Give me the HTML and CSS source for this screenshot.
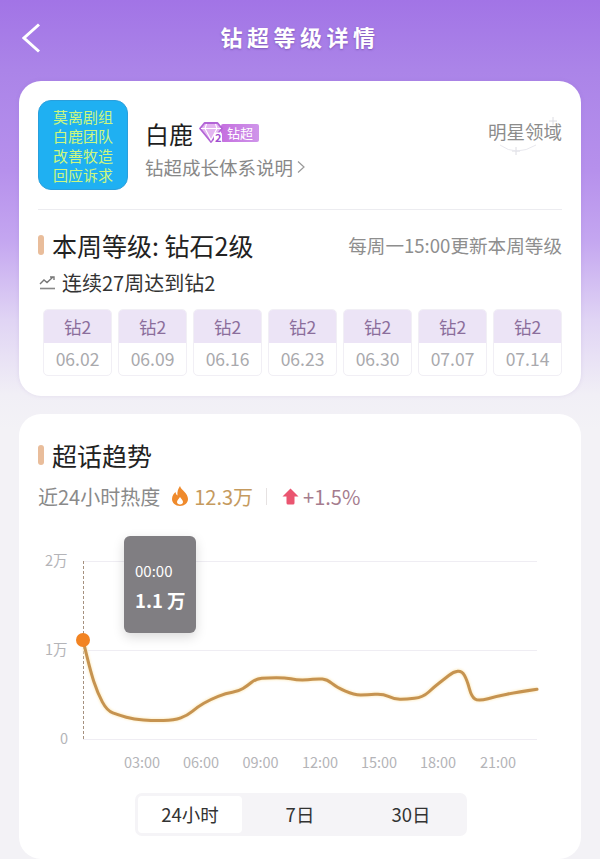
FILE: index.html
```html
<!DOCTYPE html>
<html>
<head>
    <title>钻超等级详情</title>
    <link rel="stylesheet" href="styles.css">
</head>
<body>
    <header class="topbar">
        <svg class="back" width="18" height="30" viewBox="0 0 18 30"><path d="M17 1.5 L2 15 L17 28.5" fill="none" stroke="#fff" stroke-width="3"/></svg>
        <h1>钻超等级详情</h1>
    </header>

    <section class="card level-card">
        <div class="profile">
            <div class="avatar">莫离剧组<br>白鹿团队<br>改善牧造<br>回应诉求</div>
            <div class="info">
                <div class="name-row">
                    <span class="name">白鹿</span>
                    <span class="badge">
                        <span class="badge-text">钻超</span>
                        <svg class="gem" width="24" height="22" viewBox="0 0 24 22">
                            <path d="M5.500 1 H18.500 L23 6.500 L12 20 L1 6.500 Z" fill="#e3b5f0" stroke="#b264d6" stroke-width="1.8" stroke-linejoin="round"/>
                            <path d="M2 6.500 H22 M7.500 2 L6 6.500 L12 18 L18 6.500 L16.500 2" fill="none" stroke="#fff" stroke-width="1.1"/>
                            <rect x="15" y="10.500" width="8" height="11" rx="2" fill="#fff"/>
                        </svg>
                        <span class="gem-num">2</span>
                    </span>
                </div>
                <div class="explain">钻超成长体系说明<svg class="chev" width="8" height="14" viewBox="0 0 8 14"><path d="M1 1.5 L7 7 L1 12.5" fill="none" stroke="#999" stroke-width="1.2"/></svg></div>
            </div>
            <div class="domain">
                明星领域
                <svg class="sparkle" width="70" height="50" viewBox="0 0 70 50">
                    <path d="M61 0 V8 M57 4 H65 M24 30 V38 M20 34 H28" stroke="#dcdce2" stroke-width="1"/>
                    <path d="M8 28 Q24 40 44 28" fill="none" stroke="#e8e8ee" stroke-width="1"/>
                </svg>
            </div>
        </div>

        <div class="section-head level-head">
            <div class="section-title"><i class="mark"></i>本周等级: 钻石2级</div>
            <div class="update-note">每周一15:00更新本周等级</div>
        </div>

        <div class="streak">
            <svg width="17" height="14" viewBox="0 0 17 14"><path d="M1 8 L5 4 L8 6.5 L14 1 M11 1 H15 V4" fill="none" stroke="#777" stroke-width="1.4"/><path d="M1 12.5 H16" stroke="#888" stroke-width="1.6"/></svg>
            连续27周达到钻2
        </div>

        <div class="weeks">
            <div class="week"><div class="week-level">钻2</div><div class="week-date">06.02</div></div>
            <div class="week"><div class="week-level">钻2</div><div class="week-date">06.09</div></div>
            <div class="week"><div class="week-level">钻2</div><div class="week-date">06.16</div></div>
            <div class="week"><div class="week-level">钻2</div><div class="week-date">06.23</div></div>
            <div class="week"><div class="week-level">钻2</div><div class="week-date">06.30</div></div>
            <div class="week"><div class="week-level">钻2</div><div class="week-date">07.07</div></div>
            <div class="week"><div class="week-level">钻2</div><div class="week-date">07.14</div></div>
        </div>
    </section>

    <section class="card trend-card">
        <div class="section-title"><i class="mark"></i>超话趋势</div>

        <div class="heat">
            <span>近24小时热度</span>
            <svg class="flame" width="18" height="20" viewBox="0 0 18 20"><path d="M9 0 C10 4 17 7 17 13 C17 17 13.5 20 9 20 C4.500 20 1 17 1 13 C1 9.500 3 7.500 4.500 6 C4.800 8 5.500 9 6.500 9.500 C6 6 7 3 9 0 Z M9 11 C8 13 6 14 6 16 C6 17.500 7.300 18.500 9 18.500 C10.700 18.500 12 17.500 12 16 C12 14 10 13 9 11 Z" fill="#ef8a2c" fill-rule="evenodd"/></svg>
            <span class="heat-value">12.3万</span>
            <i class="heat-sep"></i>
            <svg class="up" width="17" height="17" viewBox="0 0 17 17"><path d="M8.500 0.500 L16.500 8.500 L12.500 8.500 L12.500 15 Q12.500 16.500 11 16.500 L6 16.500 Q4.500 16.500 4.500 15 L4.500 8.500 L0.500 8.500 Z" fill="#ea5570"/></svg>
            <span class="heat-rate">+1.5%</span>
        </div>

        <div class="chart">
            <svg width="524" height="250" viewBox="38 530 524 250">
                <defs>
                    <filter id="glow" x="-5%" y="-20%" width="110%" height="140%"><feGaussianBlur stdDeviation="1"/></filter>
                </defs>
                <path class="grid" d="M83 561.500 H537 M83 650.500 H537 M83 739.500 H537"/>
                <path class="guide" d="M83.500 561 V739"/>
                <text class="axis" x="45" y="566">2万</text>
                <text class="axis" x="45" y="655">1万</text>
                <text class="axis" x="60" y="744">0</text>
                <g class="axis time">
                    <text x="142" y="768">03:00</text>
                    <text x="201" y="768">06:00</text>
                    <text x="260.500" y="768">09:00</text>
                    <text x="320" y="768">12:00</text>
                    <text x="379" y="768">15:00</text>
                    <text x="438" y="768">18:00</text>
                    <text x="498" y="768">21:00</text>
                </g>
                <path class="line-glow" filter="url(#glow)" d="M83.4 641.7 Q90 670 93.8 681.5 Q97.6 693 102.3 701.9 Q107 710.7 112.8 712.9 Q118.6 715 126.3 717.2 Q134 719.3 143.5 720 Q153 720.7 163.5 720.5 Q174 720.3 180.8 717.8 Q187.5 715.3 192.3 711.3 Q197 707.3 203.8 703.3 Q210.5 699.3 218.2 696.3 Q225.8 693.3 232.4 692.2 Q239 691 243 688.5 Q247 686 251.3 682.5 Q255.6 679 261.8 678.3 Q268 677.7 276.5 677.7 Q285 677.7 290.8 678.8 Q296.6 680 302.3 680 Q308 680 312.8 679.3 Q317.6 678.7 322.3 679 Q327 679.3 331.9 683.3 Q336.8 687.3 345.4 691.2 Q354 695 360.7 695 Q367.4 695 375 694.3 Q382.7 693.7 388.4 696.3 Q394 699 399.9 699.2 Q405.7 699.3 414.4 698.3 Q423 697.3 428.7 692 Q434.4 686.7 439.2 683 Q444 679.3 448.8 675.5 Q453.5 671.7 457.8 671.3 Q462 671 464.5 675.5 Q467 680 469.3 688.3 Q471.5 696.7 475 699 Q478.4 701.3 488 698.7 Q497.5 696 507 694.2 Q516.7 692.3 537 689.3"/>
                <path class="line" d="M83.4 641.7 Q90 670 93.8 681.5 Q97.6 693 102.3 701.9 Q107 710.7 112.8 712.9 Q118.6 715 126.3 717.2 Q134 719.3 143.5 720 Q153 720.7 163.5 720.5 Q174 720.3 180.8 717.8 Q187.5 715.3 192.3 711.3 Q197 707.3 203.8 703.3 Q210.5 699.3 218.2 696.3 Q225.8 693.3 232.4 692.2 Q239 691 243 688.5 Q247 686 251.3 682.5 Q255.6 679 261.8 678.3 Q268 677.7 276.5 677.7 Q285 677.7 290.8 678.8 Q296.6 680 302.3 680 Q308 680 312.8 679.3 Q317.6 678.7 322.3 679 Q327 679.3 331.9 683.3 Q336.8 687.3 345.4 691.2 Q354 695 360.7 695 Q367.4 695 375 694.3 Q382.7 693.7 388.4 696.3 Q394 699 399.9 699.2 Q405.7 699.3 414.4 698.3 Q423 697.3 428.7 692 Q434.4 686.7 439.2 683 Q444 679.3 448.8 675.5 Q453.5 671.7 457.8 671.3 Q462 671 464.5 675.5 Q467 680 469.3 688.3 Q471.5 696.7 475 699 Q478.4 701.3 488 698.7 Q497.5 696 507 694.2 Q516.7 692.3 537 689.3"/>
                <circle cx="83" cy="640" r="7" fill="#f28322"/>
            </svg>
            <div class="tooltip">
                <div class="tip-time">00:00</div>
                <div class="tip-value">1.1 万</div>
            </div>
        </div>

        <div class="tabs">
            <div class="tab active">24小时</div>
            <div class="tab">7日</div>
            <div class="tab">30日</div>
        </div>
    </section>
</body>
</html>
```

FILE: styles.css
```css
html, body {
    height: 859px;
    overflow: hidden;
}
body {
    margin: 0;
    padding: 0 19px;
    box-sizing: border-box;
    font-family: "Noto Sans CJK SC", sans-serif;
    color: #2b2b2b;
    background-color: #f3f2f6;
    background-image: linear-gradient(180deg, #a274e6 0, #ab84e8 70px, #b690ec 170px, #c4a6f0 240px, #e0d4f4 320px, #f1eff6 395px, #f3f2f6 430px);
    background-repeat: no-repeat;
}
.topbar {
    height: 81px;
    margin: 0 -19px;
    position: relative;
    display: flex;
    justify-content: center;
    align-items: flex-start;
}
.topbar h1 {
    margin: 20px 0 0 0;
    font-size: 22px;
    line-height: 32px;
    font-weight: 700;
    letter-spacing: 4.5px;
    color: #fff;
    text-shadow: 0 1px 2px rgba(90, 50, 140, 0.5);
}
.back {
    position: absolute;
    left: 22px;
    top: 23px;
}
.card {
    background: #fff;
    border-radius: 22px;
    padding: 0 19px;
}
.level-card {
    height: 315px;
    box-sizing: border-box;
    padding-top: 19px;
    box-shadow: 0 0 4px rgba(120, 90, 170, 0.12);
}
.trend-card {
    height: 445px;
    box-sizing: border-box;
    margin-top: 18px;
    padding-top: 23px;
}
.profile {
    display: flex;
    height: 110px;
    border-bottom: 1px solid #ececf0;
    box-sizing: border-box;
}
.avatar {
    width: 90px;
    height: 90px;
    border-radius: 13px;
    background: #1fb0f2;
    border: 1px solid #2a9fdc;
    box-sizing: border-box;
    color: #cdf77e;
    font-size: 15px;
    line-height: 19.3px;
    text-align: center;
    padding-top: 6px;
}
.info {
    margin-left: 17px;
    flex: 1;
}
.name-row {
    display: flex;
    align-items: center;
    margin-top: 15px;
    height: 36px;
}
.name {
    font-size: 24px;
    color: #1e1e1e;
}
.badge {
    display: flex;
    align-items: center;
    margin-left: 6px;
    position: relative;
    width: 60px;
    height: 22px;
}
.gem {
    position: absolute;
    left: 0;
    top: 0;
}
.gem-num {
    position: absolute;
    left: 16px;
    top: 9px;
    font-size: 11px;
    line-height: 13px;
    font-weight: 700;
    color: #a04fd0;
}
.badge-text {
    margin-left: 22px;
    width: 38px;
    text-align: center;
    height: 18px;
    line-height: 18px;
    font-size: 13px;
    color: #fff;
    background: linear-gradient(90deg, #c56fdf, #cf95ea);
    border-radius: 2px;
}
.explain {
    margin-top: 2px;
    font-size: 18.5px;
    line-height: 28px;
    color: #888;
    display: flex;
    align-items: center;
}
.chev {
    margin-left: 4px;
}
.domain {
    position: relative;
    margin-top: 17px;
    font-size: 18.5px;
    line-height: 28px;
    color: #8c8c8c;
    height: 28px;
}
.sparkle {
    position: absolute;
    right: 0;
    top: 0;
    pointer-events: none;
}
.section-head {
    display: flex;
    justify-content: space-between;
    align-items: center;
}
.level-head {
    margin-top: 17px;
}
.section-title {
    display: flex;
    align-items: center;
    font-size: 25px;
    line-height: 36px;
    color: #222;
}
.mark {
    width: 6px;
    height: 20px;
    border-radius: 3px;
    background: #e9bd9b;
    margin-right: 8px;
}
.update-note {
    font-size: 18.6px;
    color: #8e8e8e;
    line-height: 36px;
}
.streak {
    display: flex;
    align-items: center;
    gap: 6px;
    margin-top: 5px;
    padding-left: 1px;
    font-size: 20px;
    line-height: 29px;
    color: #333;
}
.weeks {
    display: grid;
    grid-template-columns: repeat(7, 1fr);
    gap: 6px;
    margin: 12px 0 0 5px;
}
.week {
    height: 67px;
    border-radius: 5px;
    overflow: hidden;
    border: 1px solid #f1eff5;
    box-sizing: border-box;
    text-align: center;
}
.week-level {
    height: 33px;
    line-height: 33px;
    font-size: 17.5px;
    color: #8b6e9c;
    background: #ece4f6;
}
.week-date {
    line-height: 32px;
    font-size: 17.5px;
    color: #a9a9ad;
}
.heat {
    display: flex;
    align-items: center;
    margin-top: 9px;
    height: 28px;
    font-size: 20px;
    color: #8a8a8a;
}
.flame {
    margin-left: 11px;
}
.heat-value {
    margin-left: 5px;
    color: #c59a5e;
}
.heat-sep {
    width: 1px;
    height: 17px;
    margin: 0 15px 0 13px;
    background: #e6e2e2;
}
.heat-rate {
    margin-left: 4px;
    color: #a57c8e;
}
.chart {
    position: relative;
    height: 250px;
    margin-top: 20px;
}
.chart svg {
    display: block;
}
.grid {
    stroke: #efedf3;
    stroke-width: 1;
    fill: none;
}
.guide {
    stroke: #a6917f;
    stroke-width: 1;
    stroke-dasharray: 3 2;
    fill: none;
}
.axis {
    font-size: 14.5px;
    fill: #b4b4b8;
}
.time text {
    text-anchor: middle;
}
.line {
    fill: none;
    stroke: #c69350;
    stroke-width: 3;
    stroke-linejoin: round;
    stroke-linecap: round;
}
.line-glow {
    fill: none;
    stroke: #fdeec8;
    stroke-width: 4.5;
}
.tooltip {
    position: absolute;
    left: 86px;
    top: 6px;
    width: 72px;
    height: 97px;
    box-sizing: border-box;
    padding: 24px 0 0 11px;
    border-radius: 6px;
    background: #807e82;
    color: #fff;
    box-shadow: 0 4px 12px rgba(0, 0, 0, 0.15);
}
.tip-time {
    font-size: 15px;
    line-height: 22px;
}
.tip-value {
    margin-top: 5px;
    font-size: 18.5px;
    line-height: 26px;
    font-weight: 700;
}
.tabs {
    display: grid;
    grid-template-columns: 104px 116px 106px;
    width: fit-content;
    margin: 13px 0 0 97px;
    padding: 3px;
    border-radius: 7px;
    background: #f5f4f7;
}
.tab {
    height: 37px;
    line-height: 37px;
    text-align: center;
    font-size: 18.5px;
    color: #333;
}
.tab.active {
    background: #fff;
    border-radius: 4px;
}
```
